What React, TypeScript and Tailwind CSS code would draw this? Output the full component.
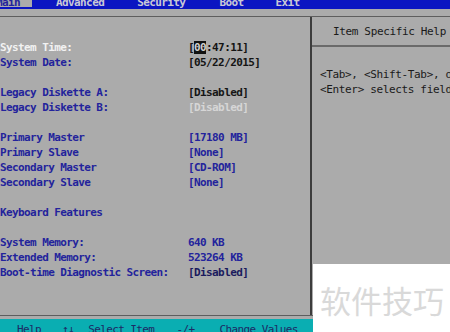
import React from "react";

const mono = { fontFamily: '"DejaVu Sans Mono", "Liberation Mono", monospace' };

const LBL = "text-[#23239c]";

function Row({ label, value, labelCls, valueCls }: { label: string; value?: React.ReactNode; labelCls: string; valueCls?: string }) {
  return (
    <div className="flex h-[15px] items-center whitespace-pre">
      <span className={`w-[188px] shrink-0 ${labelCls}`}>{label}</span>
      {value !== undefined && <span className={valueCls}>{value}</span>}
    </div>
  );
}

const Gap = () => <div className="h-[15px]" />;

export default function App() {
  return (
    <div
      className="relative w-[450px] h-[332px] overflow-hidden bg-[#ababab] text-[11px] font-bold tracking-[-0.6px] leading-[15px]"
      style={mono}
    >
      {/* top menu bar */}
      <div className="flex h-[9px] overflow-hidden bg-[#0b16c2] text-[#c9c9d6] leading-[10px]">
        <div className="w-[36px] shrink-0 h-full bg-[#ababab] text-[#23239c] -mt-[2px] -ml-[4px]">
          <span>Main</span>
        </div>
        <span className="-mt-[2px] ml-[24px]">Advanced</span>
        <span className="-mt-[2px] ml-[33px]">Security</span>
        <span className="-mt-[2px] ml-[34px]">Boot</span>
        <span className="-mt-[2px] ml-[32px]">Exit</span>
      </div>

      {/* frame */}
      <div className="mt-[7px] h-[300px] flex border-t border-b border-[#5e5e5e]">
        <div className="w-[310px] shrink-0 pt-[23px]">
          <Row label="System Time:" labelCls="text-[#f2f2f2]" valueCls="text-[#141414]" value={<>[<span className="bg-[#111111] text-[#cfcfcf]">00</span>:47:11]</>} />
          <Row label="System Date:" labelCls={LBL} valueCls="text-[#141414]" value="[05/22/2015]" />
          <Gap />
          <Row label="Legacy Diskette A:" labelCls={LBL} valueCls="text-[#161616]" value="[Disabled]" />
          <Row label="Legacy Diskette B:" labelCls={LBL} valueCls="text-[#d6d6d6]" value="[Disabled]" />
          <Gap />
          <Row label="Primary Master" labelCls={LBL} valueCls={LBL} value="[17180 MB]" />
          <Row label="Primary Slave" labelCls={LBL} valueCls={LBL} value="[None]" />
          <Row label="Secondary Master" labelCls={LBL} valueCls={LBL} value="[CD-ROM]" />
          <Row label="Secondary Slave" labelCls={LBL} valueCls={LBL} value="[None]" />
          <Gap />
          <Row label="Keyboard Features" labelCls={LBL} />
          <Gap />
          <Row label="System Memory:" labelCls={LBL} valueCls={LBL} value="640 KB" />
          <Row label="Extended Memory:" labelCls={LBL} valueCls={LBL} value="523264 KB" />
          <Row label="Boot-time Diagnostic Screen:" labelCls={LBL} valueCls="text-[#1b1b5e]" value="[Disabled]" />
        </div>
        <div className="flex-1 min-w-0 overflow-hidden border-l-2 border-[#3c3c3c] flex flex-col text-[#1a1a1a] font-normal tracking-[-0.35px]">
          <div className="h-[30px] border-b-2 border-[#6a6a6a] flex items-center pl-[21px] whitespace-pre">
            Item Specific Help
          </div>
          <div className="pt-[20px] pl-[8px] whitespace-pre">
            <div className="h-[15px] leading-[15px]">&lt;Tab&gt;, &lt;Shift-Tab&gt;, or</div>
            <div className="h-[15px] leading-[15px]">&lt;Enter&gt; selects field.</div>
          </div>
        </div>
      </div>

      {/* bottom bar */}
      <div className="mt-[3px] h-[13px] bg-[#0aaeb2] flex text-[#1c2a66] font-normal whitespace-pre leading-[15px] pt-[3px]">
        <span className="ml-[17px]">Help</span>
        <span className="ml-[21px]">↑↓</span>
        <span className="ml-[14px]">Select Item</span>
        <span className="ml-[22px]">-/+</span>
        <span className="ml-[25px]">Change Values</span>
      </div>

      {/* watermark overlay */}
      <div className="absolute left-[313px] top-[264px] w-[137px] h-[68px] bg-white flex items-center pl-[7px] pt-[2px]">
        <span
          className="text-[31px] leading-none tracking-normal font-normal text-[#d9d9d9]"
          style={{ fontFamily: '"Noto Sans CJK SC", sans-serif' }}
        >
          软件技巧
        </span>
      </div>
    </div>
  );
}
